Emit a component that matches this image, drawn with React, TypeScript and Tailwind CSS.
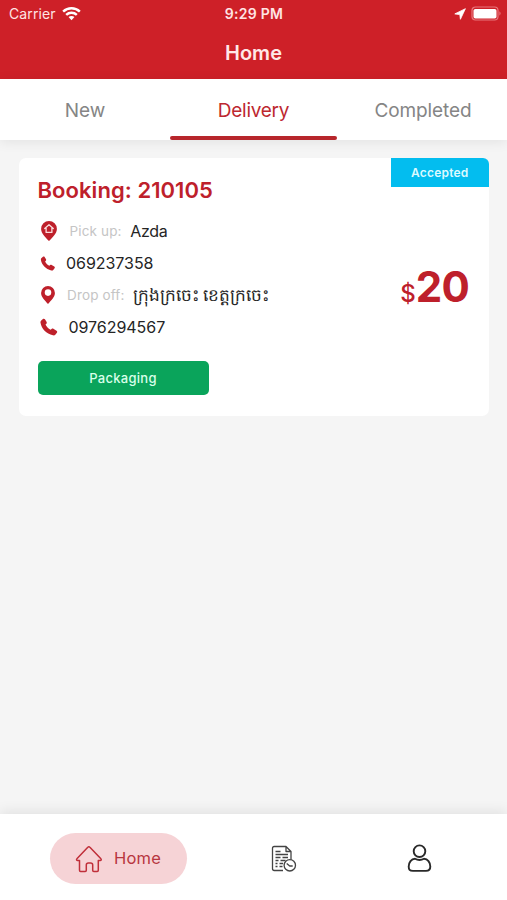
import React from "react";

function Phone({ className }: { className: string }) {
  return (
    <svg viewBox="0 0 16 16" className={className} fill="#be202b">
      <path d="M1.1 2.2 2.600.9c.6-.5 1.400-.4 1.800.2l1.500 2.400c.3.500.2 1.100-.2 1.500l-.8.8c.9 2 2.400 3.500 4.500 4.700l.9-.8c.5-.4 1.100-.4 1.600-.1l2.800 1.700c.7.500.8 1.200.3 1.800l-1.200 1.500c-.6.8-1.400 1-2.300.8C5.600 14.100 1.300 9.700.4 4.100c-.1-.7.1-1.400.7-1.900Z" />
    </svg>
  );
}

function Pin({ house, className }: { house?: boolean; className: string }) {
  return (
    <svg viewBox="0 0 16 20" preserveAspectRatio="none" className={className}>
      <path d="M8 0a7.900 7.900 0 0 0-7.900 7.900C.1 12.200 4.500 16.400 8 20c3.500-3.600 7.900-7.800 7.900-12.100A7.900 7.900 0 0 0 8 0Z" fill="#be202b" />
      {house ? (
        <path d="m3.700 7.600 4.300-3.800 4.300 3.800M5.100 7.200v4.200h5.800V7.200" fill="none" stroke="#fbdcdc" strokeWidth="1.300" strokeLinejoin="round" strokeLinecap="round" />
      ) : (
        <circle cx="8" cy="7.300" r="3.700" fill="white" />
      )}
    </svg>
  );
}

function StatusBar() {
  return (
    <div className="grid h-[27px] grid-cols-3 items-center pl-[9px] pr-[5px] text-[14px] leading-none text-[#ffe4e4]">
      <div className="flex items-center gap-[6px]">
        <span className="text-[14px] tracking-[0.1px]">Carrier</span>
        <svg viewBox="0 0 20 15" className="h-[15px] w-[19px]" fill="none" stroke="white" strokeWidth="2.600">
          <path d="M1.200 5.500c5-4.700 12.600-4.700 17.600 0M4.400 8.900c3.200-3 8-3 11.200 0" />
          <path d="M6.900 11.300c1.800-1.500 4.400-1.500 6.200 0L10 14.600Z" fill="white" stroke="none" />
        </svg>
      </div>
      <span className="pr-[3px] text-center font-semibold tracking-[0.300px] whitespace-nowrap">9:29 PM</span>
      <div className="flex items-center justify-end gap-[5px]">
        <svg viewBox="0 0 12 12" className="size-[12px]" fill="white" stroke="white" strokeWidth="0.800" strokeLinejoin="round">
          <path d="M11.400.7.800 5.900l5 .7.600 4.700Z" />
        </svg>
        <svg viewBox="0 0 31 15" className="h-[15px] w-[31px]">
          <rect x="1" y="1" width="26" height="13" rx="3.500" fill="none" stroke="#e8777d" strokeWidth="1.200" />
          <rect x="2.500" y="3" width="23" height="9.500" rx="1.800" fill="white" />
          <path d="M28.500 5.300q2 2.200 0 4.400Z" fill="#f0898e" />
        </svg>
      </div>
    </div>
  );
}

function Tabs() {
  return (
    <nav className="relative z-10 grid h-[61px] grid-cols-3 bg-white text-center text-[19px] leading-[63px] tracking-[-0.100px] text-[#858585] shadow-[0_2px_12px_rgba(0,0,0,0.08)]">
      <span className="pl-px">New</span>
      <div className="flex flex-col text-[#bd2830]">
        <span className="h-[57px] tracking-[-0.250px]">Delivery</span>
        <span className="mx-[1px] h-[4px] rounded-full bg-[#b7262b]" />
      </div>
      <span className="pl-px">Completed</span>
    </nav>
  );
}

function BookingCard() {
  return (
    <section className="relative ml-[19px] mr-[18px] mt-[18px] flex h-[258px] justify-between rounded-[7px] bg-white pl-[18.500px] pr-[20px]">
      <div className="flex flex-col text-[16px] text-[#252525]">
        <h2 className="mt-[18px] h-[28px] whitespace-nowrap text-[22px] leading-[28px] font-semibold tracking-[0.060px] text-[#be202b]">Booking: 210105</h2>
        <div className="mt-[11px] flex h-[32px] items-center">
          <Pin house className="ml-[3px] h-[20px] w-[16px]" />
          <span className="ml-[13px] text-[13.500px] tracking-[0.150px] text-[#c5c5c5]">Pick up:</span>
          <span className="ml-[8.500px] tracking-[-0.300px]">Azda</span>
        </div>
        <div className="flex h-[32px] items-center">
          <Phone className="ml-[2px] h-[15px] w-[16px]" />
          <span className="ml-[10.500px] tracking-[-0.050px]">069237358</span>
        </div>
        <div className="flex h-[32px] items-center">
          <Pin className="ml-[3px] h-[18px] w-[14px]" />
          <span className="ml-[12.500px] text-[13.500px] tracking-[0.150px] text-[#c5c5c5]">Drop off:</span>
          <span className="ml-[8px] whitespace-nowrap text-[17px] leading-[32px]">ក្រុងក្រចេះ ខេត្តក្រចេះ</span>
        </div>
        <div className="flex h-[32px] items-center">
          <Phone className="ml-[2px] h-[18px] w-[18px]" />
          <span className="ml-[11px] tracking-[-0.050px]">0976294567</span>
        </div>
        <button className="mt-[18px] h-[34px] w-[171px] rounded-[5px] bg-[#0aa45b] pt-px text-[13px] font-medium tracking-[0.300px] text-[#d9ffea]">Packaging</button>
      </div>
      <div className="flex items-baseline self-center pt-[3px] text-[#be202b]">
        <span className="text-[24px] font-medium">$</span>
        <span className="text-[42px] leading-none font-bold tracking-[-0.800px]">20</span>
      </div>
      <span className="absolute top-0 right-0 h-[28.500px] w-[98.500px] rounded-tr-[6px] bg-[#03bdef] text-center text-[12px] leading-[30px] font-semibold tracking-[0.200px] text-[#dcfaff]">Accepted</span>
    </section>
  );
}

function BottomBar() {
  return (
    <footer className="mt-auto flex h-[86px] items-start bg-white pt-[19px] shadow-[0_-3px_12px_rgba(0,0,0,0.08)]">
      <div className="ml-[50px] flex h-[51px] w-[137px] items-center rounded-full bg-[#f6d3d6] pl-[25px] text-[16.500px] tracking-[0.200px] text-[#b83640]">
        <svg viewBox="0 0 28 28" className="size-[28px]" fill="none" stroke="#c02f3a" strokeWidth="1.500" strokeLinejoin="round" strokeLinecap="round">
          <path d="M4.500 15.500H2.600c-1 0-1.400-1-.7-1.700L12.800 2.300c.6-.7 1.500-.7 2.100 0l11 11.500c.7.700.300 1.700-.7 1.700h-1.900v9.800c0 .7-.4 1.100-1.100 1.100h-3.400c-.7 0-1.100-.4-1.100-1.100v-5.200c0-1.400-.8-2.100-2.100-2.100h-2.200c-1.300 0-2.100.7-2.100 2.100v5.200c0 .7-.4 1.100-1.100 1.100H5.600c-.7 0-1.100-.4-1.100-1.100Z" />
        </svg>
        <span className="ml-[11px] pb-px">Home</span>
      </div>
      <svg viewBox="0 0 26 28" className="mt-[12px] ml-[84px] h-[28px] w-[26px]" fill="none" stroke="#444" strokeWidth="1.300" strokeLinejoin="round">
        <path d="M12 25.500H3.200Q1.500 25.500 1.500 23.800V3.200Q1.500 1.500 3.200 1.500H15l5 5v9M15 1.500v5h5" />
        <path d="M4.500 6.500h5M4.500 9.500H17M4.500 12.500h5m2 0H17M4.500 15.500h3m2 0h5M4.500 18.500h2m2 0h3.500M4.500 21.500h2m2 0h3" strokeWidth="1.500" />
        <circle cx="18.800" cy="20.300" r="5.700" fill="white" />
        <path d="m15.700 18.500 3 2.500h3" />
      </svg>
      <svg viewBox="0 0 26 30" className="mt-[10px] ml-[109px] h-[30px] w-[26px]" fill="none" stroke="#292929" strokeWidth="1.900">
        <circle cx="13.500" cy="8.200" r="5.800" />
        <path d="M9 15.800c1.400.8 2.900 1.200 4.500 1.200s3.100-.4 4.500-1.200c3.600 0 6.300 3.500 6.300 7.700 0 3-1 4.400-4.300 4.400H7c-3.300 0-4.300-1.400-4.300-4.400 0-4.200 2.700-7.700 6.300-7.700Z" strokeLinejoin="round" />
      </svg>
    </footer>
  );
}

export default function App() {
  return (
    <main className="flex h-[900px] w-[507px] flex-col overflow-hidden bg-[#f5f5f5] font-[Inter,'Liberation_Sans',sans-serif]">
      <header className="h-[79px] shrink-0 bg-[#ce2028]">
        <StatusBar />
        <h1 className="text-center text-[20px] leading-[52px] font-semibold text-[#ffe8e8]">Home</h1>
      </header>
      <Tabs />
      <BookingCard />
      <BottomBar />
    </main>
  );
}
